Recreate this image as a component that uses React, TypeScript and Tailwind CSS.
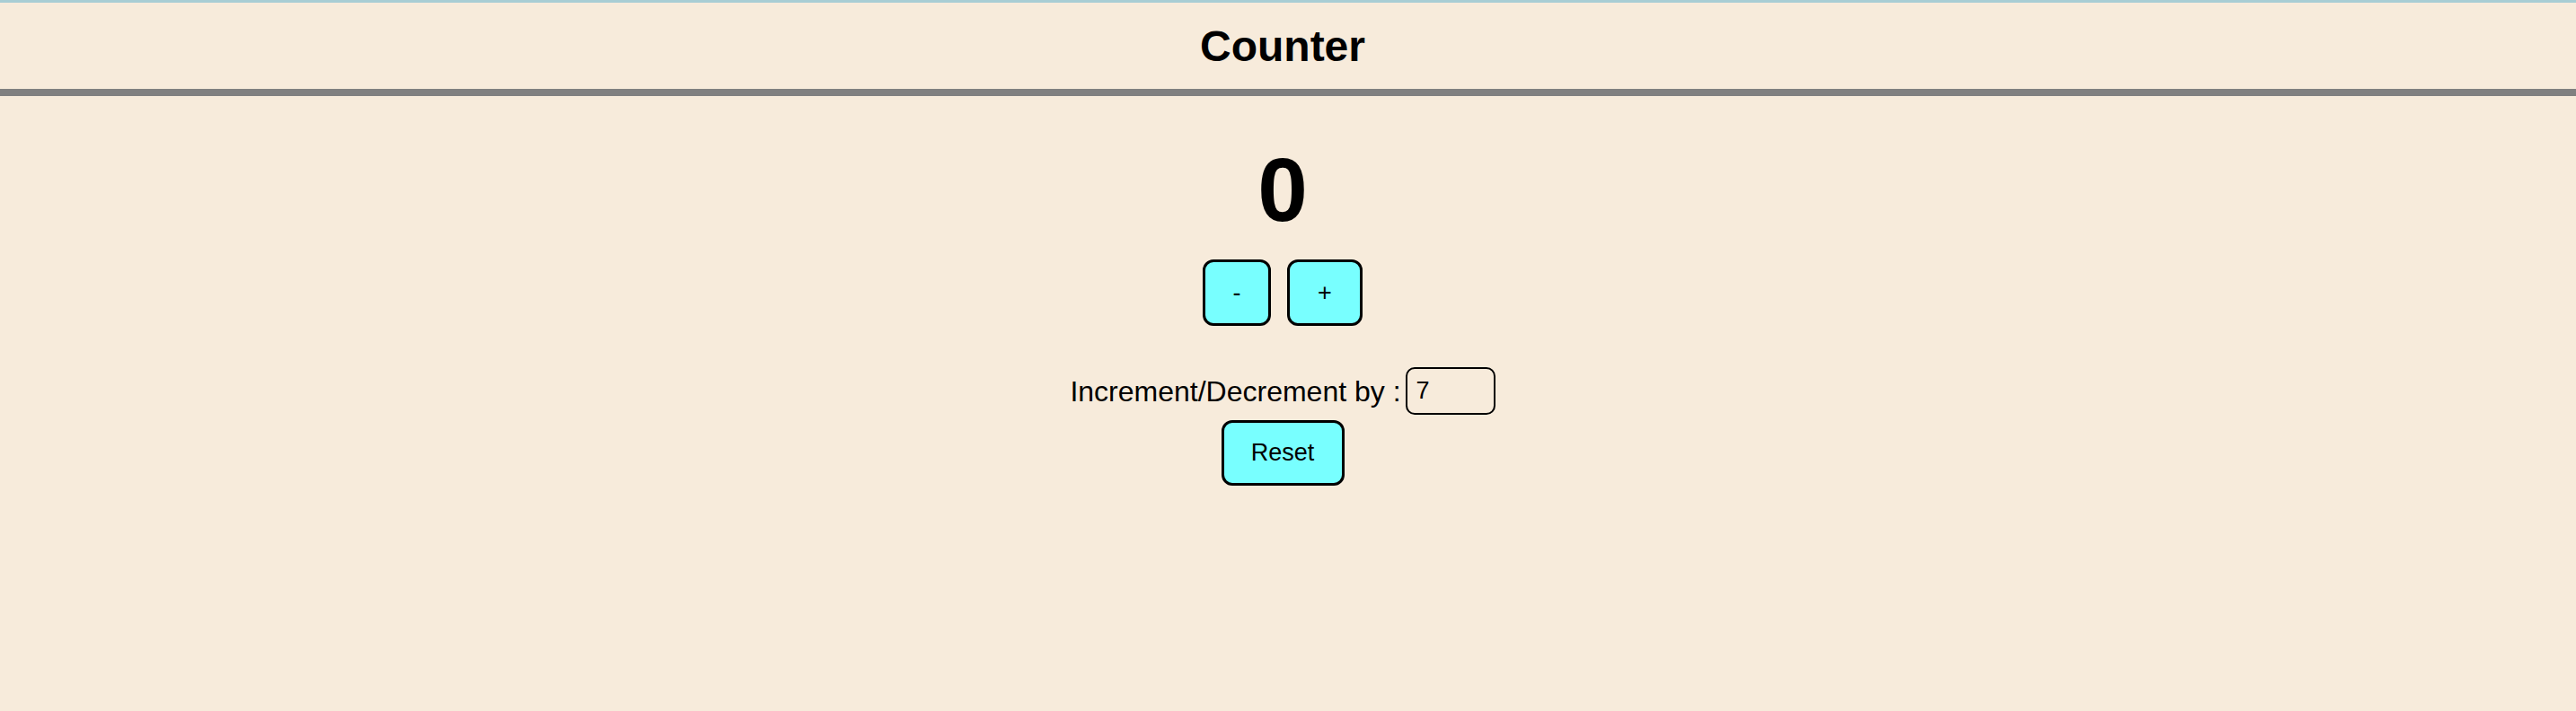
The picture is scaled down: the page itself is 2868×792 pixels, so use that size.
import { useState } from "react";

export default function App() {
  const [count, setCount] = useState(0);
  const [step, setStep] = useState("7");

  const n = Number(step) || 0;

  return (
    <div className="min-h-screen bg-[#f7ebdb] text-black font-['Liberation_Sans',Arial,sans-serif]">
      <div className="h-[3px] bg-[#a8cdd4]" />

      {/* Header */}
      <header className="h-[104px] flex items-center justify-center border-b-8 border-[#808080] pr-3">
        <h1 className="text-[48px] font-bold mt-[2px]">Counter</h1>
      </header>

      <main className="flex flex-col items-center pr-3">
        <div className="text-[100px] font-bold leading-none mt-[54px]">{count}</div>

        <div className="flex gap-[18px] mt-[28px]">
          <button
            onClick={() => setCount(count - n)}
            className="w-[76px] h-[74px] bg-[#78ffff] border-[3px] border-black rounded-[12px] text-[27px]"
          >
            -
          </button>
          <button
            onClick={() => setCount(count + n)}
            className="w-[84px] h-[74px] bg-[#78ffff] border-[3px] border-black rounded-[12px] text-[27px]"
          >
            +
          </button>
        </div>

        <div className="flex items-center gap-[5px] mt-[46px]">
          <span className="text-[32px]">Increment/Decrement by :</span>
          <input
            value={step}
            onChange={(e) => setStep(e.target.value)}
            className="w-[100px] h-[53px] border-2 border-black rounded-[10px] px-[10px] text-[27px] bg-transparent outline-none"
          />
        </div>

        <button
          onClick={() => setCount(0)}
          className="w-[137px] h-[73px] mt-[6px] bg-[#78ffff] border-[3px] border-black rounded-[12px] text-[27px]"
        >
          Reset
        </button>
      </main>
    </div>
  );
}
